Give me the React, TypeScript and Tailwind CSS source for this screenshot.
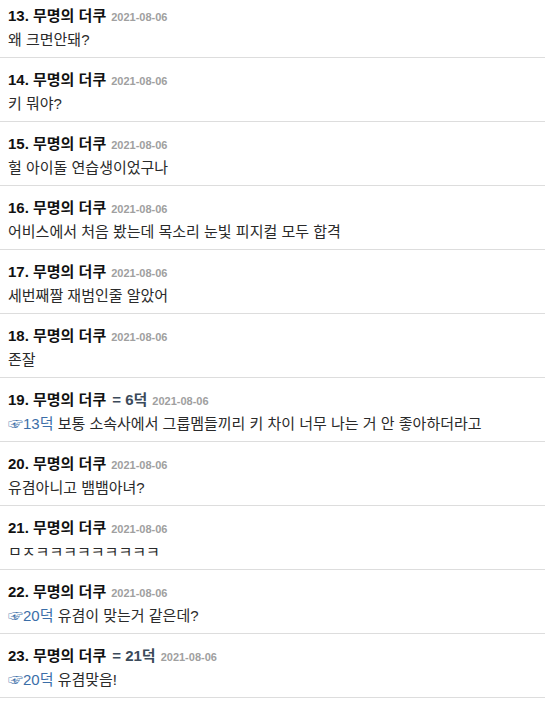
import React from 'react';

type Comment = {
  no: number;
  ref?: string;
  linkText?: string;
  body: string;
};

const comments: Comment[] = [
  { no: 13, body: '왜 크면안돼?' },
  { no: 14, body: '키 뭐야?' },
  { no: 15, body: '헐 아이돌 연습생이었구나' },
  { no: 16, body: '어비스에서 처음 봤는데 목소리 눈빛 피지컬 모두 합격' },
  { no: 17, body: '세번째짤 재범인줄 알았어' },
  { no: 18, body: '존잘' },
  { no: 19, ref: '6덕', linkText: '☞13덕', body: ' 보통 소속사에서 그룹멤들끼리 키 차이 너무 나는 거 안 좋아하더라고' },
  { no: 20, body: '유겸아니고 뱀뱀아녀?' },
  { no: 21, body: 'ㅁㅈㅋㅋㅋㅋㅋㅋㅋㅋㅋ' },
  { no: 22, linkText: '☞20덕', body: ' 유겸이 맞는거 같은데?' },
  { no: 23, ref: '21덕', linkText: '☞20덕', body: ' 유겸맞음!' },
];

const font = "font-['Liberation_Sans','Noto_Sans_CJK_KR',sans-serif]";

function CommentItem({ c }: { c: Comment }) {
  return (
    <li className="border-b border-[#dddddd] px-[8px] pt-[12px] pb-[4px] first:pt-[6px]">
      <div className="flex items-baseline h-[20px] leading-[20px]">
        <span className="text-[15px] font-bold text-[#111]">
          {c.no}. 무명의 더쿠
        </span>
        {c.ref && (
          <span className="ml-[6px] text-[15px] font-bold text-[#3b4a5a]">= {c.ref}</span>
        )}
        <span className="ml-[5px] text-[11px] font-bold text-[#a0a0a0]">2021-08-06</span>
      </div>
      <p className="text-[15px] leading-[27px] text-[#2a2a2a]">
        {c.linkText && <a className="text-[#3b6ea8]">{c.linkText}</a>}
        {c.body}
      </p>
    </li>
  );
}

export default function App() {
  return (
    <div className={`w-[545px] bg-white ${font}`}>
      <ul>
        {comments.map((c) => (
          <CommentItem key={c.no} c={c} />
        ))}
      </ul>
    </div>
  );
}
